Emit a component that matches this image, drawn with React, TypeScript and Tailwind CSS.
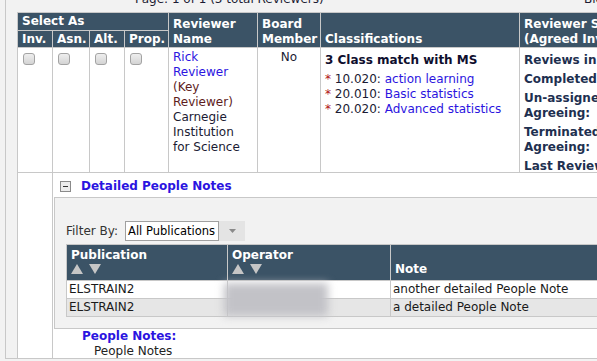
import React from 'react';

// header cell look, shared by both tables
const th = 'bg-[#3b5366] text-white font-bold px-[4px] flex flex-col justify-end';
const link = 'text-[#2b14e0] no-underline';

function Check() {
  return (
    <span className="block w-[12px] h-[12px] rounded-[3px] border border-[#a3a3a3] bg-gradient-to-b from-[#eeeeee] to-[#d4d4d4]" />
  );
}

function SortArrows() {
  return (
    <span className="flex gap-[6px] h-[14px] pt-[1px]">
      <svg width="12" height="10" viewBox="0 0 12 10">
        <path d="M6 0 L12 10 L0 10 Z" fill="#c6c6c6" />
      </svg>
      <svg width="12" height="10" viewBox="0 0 12 10">
        <path d="M0 0 L12 0 L6 10 Z" fill="#c6c6c6" />
      </svg>
    </span>
  );
}

const classifications = [
  { code: '10.020:', name: 'action learning' },
  { code: '20.010:', name: 'Basic statistics' },
  { code: '20.020:', name: 'Advanced statistics' },
];

const stats = [
  'Reviews in Progress:',
  'Completed Reviews:',
  'Un-assigned Before Agreeing:',
  'Terminated Before Agreeing:',
  'Last Review Completed:',
];

const notes = [
  { pub: 'ELSTRAIN2', note: 'another detailed People Note', bg: 'bg-white' },
  { pub: 'ELSTRAIN2', note: 'a detailed People Note', bg: 'bg-[#e6e6e6]' },
];

export default function App() {
  return (
    <div className="w-[597px] h-[361px] overflow-hidden bg-[#f2f2f2] text-[12px] leading-[15px] text-[#1b1b33] font-['DejaVu_Sans',Verdana,sans-serif]">
      <div className="ml-[5px] w-max border-l border-b border-[#c8c8c8] pl-[11px]">
        {/* pager line, mostly scrolled out of view */}
        <div className="-mt-[8px] flex h-[15px] whitespace-nowrap">
          <span className="w-[567px] pl-[118px]">Page: 1 of 1 (3 total Reviewers)</span>
          <span>Bio</span>
        </div>

        {/* reviewer table */}
        <div className="mt-[5px] grid grid-cols-[34px_36px_34px_43px_88px_62px_198px_185px] grid-rows-[17px_16px_124px_185px] gap-px bg-[#c8c8c8] px-px pt-px">
          <div className={`${th} col-span-4 pb-[1px]`}>Select As</div>
          <div className={`${th} row-span-2`}>
            <span>Reviewer</span>
            <span>Name</span>
          </div>
          <div className={`${th} row-span-2 pr-0`}>
            <span>Board</span>
            <span>Member</span>
          </div>
          <div className={`${th} row-span-2`}>Classifications</div>
          <div className={`${th} row-span-2 whitespace-nowrap`}>
            <span>Reviewer Statistics</span>
            <span>(Agreed Invitations)</span>
          </div>
          <div className={th}>Inv.</div>
          <div className={th}>Asn.</div>
          <div className={th}>Alt.</div>
          <div className={th}>Prop.</div>

          {/* data row */}
          <div className="bg-white pl-[5px] pt-[5px]"><Check /></div>
          <div className="bg-white pl-[5px] pt-[5px]"><Check /></div>
          <div className="bg-white pl-[5px] pt-[5px]"><Check /></div>
          <div className="bg-white pl-[5px] pt-[5px]"><Check /></div>
          <div className="bg-white px-[4px] pt-[2px]">
            <a className={link}>Rick Reviewer</a>
            <div className="text-[#5e1c1c]">(Key Reviewer)</div>
            <div>Carnegie Institution for Science</div>
          </div>
          <div className="bg-white pt-[2px] text-center">No</div>
          <div className="bg-white px-[4px] pt-[5px] whitespace-nowrap">
            <div className="font-bold text-[#0f0f2e]">3 Class match with MS</div>
            <div className="mt-[4px]">
              {classifications.map((c) => (
                <div key={c.code}>
                  <span className="text-[#b01010]">*</span> {c.code} <a className={link}>{c.name}</a>
                </div>
              ))}
            </div>
          </div>
          <div className="bg-white px-[4px] pt-[5px] overflow-hidden flex flex-col gap-[4px]">
            {stats.map((s) => (
              <div key={s} className="font-bold text-[#1e3050]">{s}</div>
            ))}
          </div>

          {/* people notes row */}
          <div className="bg-white" />
          <div className="col-span-7 bg-white pl-[1px]">
            <div className="flex h-[24px] items-center pl-[6px] pt-[3px]">
              <span className="flex h-[11px] w-[11px] items-center justify-center border border-[#8a8a8a] bg-[#ececec]">
                <span className="h-px w-[5px] bg-[#333]" />
              </span>
              <a className={`${link} ml-[10px] font-bold`}>Detailed People Notes</a>
            </div>

            <div className="border border-[#c8c8c8] bg-[#f2f2f2] pl-[11px] pt-[23px] pb-[11px]">
              <div className="flex h-[20px] items-center text-[#333]">
                <span>Filter By:</span>
                <div className="ml-[7px] flex h-[20px]">
                  <div className="w-[94px] overflow-hidden whitespace-nowrap border border-[#a0a0a0] bg-white pl-[2px] text-[11.5px] leading-[18px] text-black">
                    All Publications
                  </div>
                  <div className="flex w-[26px] items-center justify-center bg-[#e4e4e4]">
                    <svg width="7" height="4" viewBox="0 0 7 4">
                      <path d="M0 0 L7 0 L3.5 4 Z" fill="#8a8a8a" />
                    </svg>
                  </div>
                </div>
              </div>

              <div className="relative mt-[3px]">
                <div className="grid grid-cols-[160px_162px_1fr] grid-rows-[35px_17px_17px] gap-px bg-[#c8c8c8] p-px">
                  <div className={`${th} justify-start pt-[3px]`}>
                    <span>Publication</span>
                    <SortArrows />
                  </div>
                  <div className={`${th} justify-start pt-[3px]`}>
                    <span>Operator</span>
                    <SortArrows />
                  </div>
                  <div className={`${th} pb-[3px]`}>Note</div>
                  {notes.map((n) => (
                    <React.Fragment key={n.note}>
                      <div className={`${n.bg} pl-[2px] leading-[17px] text-[#1a1a1a]`}>{n.pub}</div>
                      <div className={n.bg} />
                      <div className={`${n.bg} pl-[2px] leading-[17px] whitespace-nowrap text-[#1a1a1a]`}>{n.note}</div>
                    </React.Fragment>
                  ))}
                </div>
                {/* redacted operator names */}
                <div className="absolute left-[158px] top-[39px] h-[33px] w-[104px] bg-[#c2c2c7] blur-[4px]" />
              </div>
            </div>

            <div className="pl-[28px] font-bold text-[#2b14e0]">People Notes:</div>
            <div className="pl-[40px] leading-[14px] text-[#222]">People Notes</div>
          </div>
        </div>
      </div>
    </div>
  );
}
